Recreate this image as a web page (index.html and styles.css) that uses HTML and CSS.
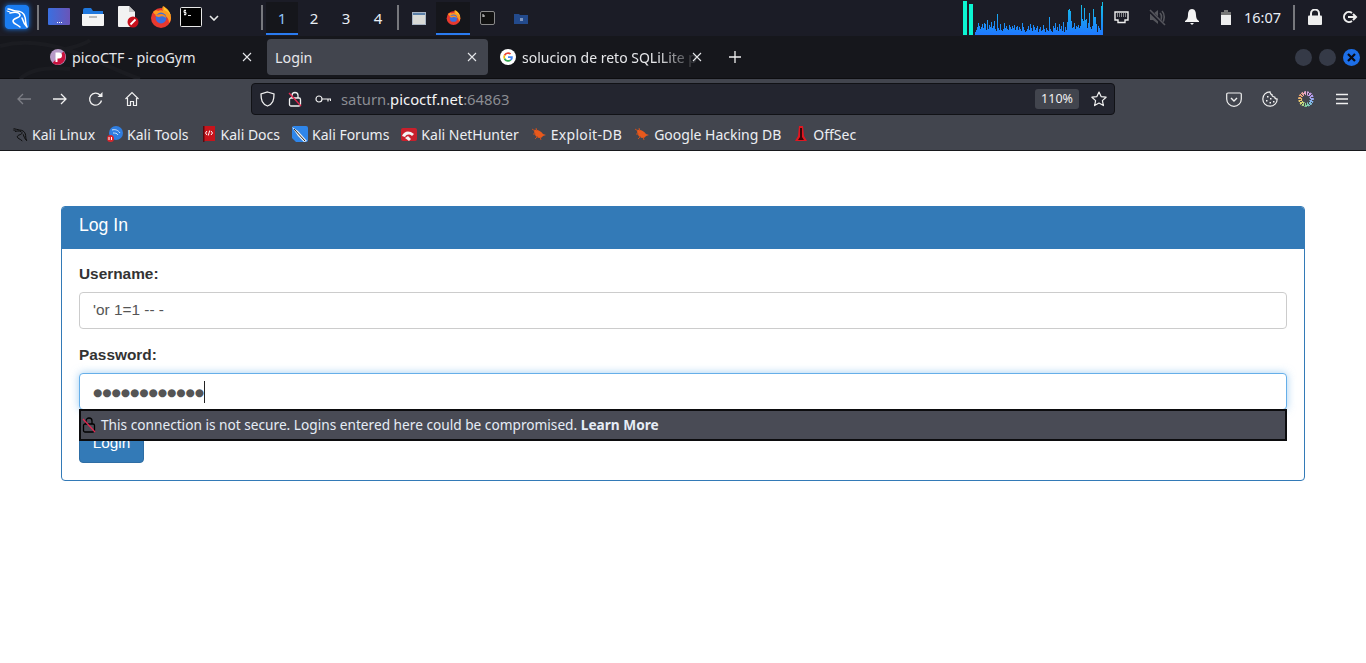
FILE: index.html
```html
<!DOCTYPE html>
<html lang="en">
<head>
    <meta charset="UTF-8">
    <title>Login</title>
    <link rel="stylesheet" href="styles.css">
</head>
<body>
    <!-- shared icons -->
    <svg class="defs" width="0" height="0">
        <defs>
            <linearGradient id="bars" x1="0" y1="0" x2="0" y2="1">
                <stop offset="0" stop-color="#14c4e6"/>
                <stop offset="1" stop-color="#1f78ff"/>
            </linearGradient>
            <symbol id="firefox" viewBox="0 0 22 22">
                <circle cx="11" cy="12" r="10" fill="#e8392f"/>
                <path d="M3 6c2-2 4-2 5-1 2-1 4-1 5 0-1-2-1-3 0-5 4 2 8 6 8 12 0 2-1 4-2 5 0-6-5-9-9-8-3 0-5 1-7-3z" fill="#ff9a1f"/>
                <path d="M14 1c3 2 6 5 7 9-2-3-4-5-7-6z" fill="#ffc72e"/>
                <circle cx="11" cy="12" r="5.4" fill="#3b6fe0"/>
                <path d="M5 9c2 0 4-1 6-1 3 0 5 2 5 4-2-2-5-2-7-1-2 0-3-1-4-2z" fill="#ff8a1f"/>
            </symbol>
            <symbol id="dragon" viewBox="0 0 24 24" fill="none" stroke-linecap="round" stroke-linejoin="round">
                <path d="M3 4c3 0 5 2 8 2 4 0 8 2 9 6 1 3 0 6 2 10-3-3-4-6-5-9" stroke-width="1.500"/>
                <path d="M5 8c4-1 9-1 10 2 1 3-7 3-7 6 0 3 4 3 7 6" stroke-width="1.500"/>
                <path d="M2 6l3 1" stroke-width="1"/>
            </symbol>
            <symbol id="bug" viewBox="0 0 16 16">
                <path d="M3 4c3-1 7 1 9 4l3 1-3 1c-1 2-4 3-6 1C4 10 3 7 3 4z" fill="#e8591c"/>
                <path d="M1 3l3 2M5 2l1 3M2 8l3 0M4 13l3-3M10 14l-1-3" stroke="#c7501f" fill="none"/>
            </symbol>
            <symbol id="close" viewBox="0 0 10 10">
                <path d="M1 1l8 8M9 1l-8 8" stroke="#e6e7ea" stroke-width="1.100" fill="none"/>
            </symbol>
        </defs>
    </svg>

    <!-- desktop panel -->
    <div class="panel">
        <svg class="kali-logo" width="24" height="24" viewBox="0 0 24 24">
            <rect width="24" height="24" rx="3" fill="#1a7cf0"/>
            <use href="#dragon" stroke="#fff"/>
        </svg>
        <span class="sep sep-first"></span>
        <svg class="launch launch-desktop" width="22" height="18" viewBox="0 0 22 18">
            <defs>
                <linearGradient id="desk" x1="0" y1="0" x2="1" y2="0">
                    <stop offset="0" stop-color="#3a6fe0"/>
                    <stop offset="1" stop-color="#6a55b8"/>
                </linearGradient>
            </defs>
            <rect width="22" height="17" rx="1" fill="url(#desk)"/>
            <path d="M9 14h1v1H9zM11 14h1v1h-1zM13 14h1v1h-1z" fill="#fff"/>
        </svg>
        <svg class="launch launch-folder" width="22" height="20" viewBox="0 0 22 20">
            <path d="M1 3a2 2 0 0 1 2-2h6l2 3h10v3H1z" fill="#1f77dd"/>
            <path d="M0 7h22v11a1 1 0 0 1-1 1H1a1 1 0 0 1-1-1z" fill="#f4f4f4"/>
            <rect x="7" y="9" width="8" height="2" fill="#bbb"/>
        </svg>
        <svg class="launch launch-file" width="21" height="22" viewBox="0 0 21 22">
            <path d="M0 1a1 1 0 0 1 1-1h10l6 6v14a1 1 0 0 1-1 1H1a1 1 0 0 1-1-1z" fill="#f2f2f2"/>
            <path d="M11 0l6 6h-6z" fill="#c4c4c4"/>
            <circle cx="15" cy="16" r="5.500" fill="#c8101c"/>
            <path d="M12.500 18.500l5-5" stroke="#fff" stroke-width="1.800"/>
        </svg>
        <svg class="launch launch-fox" width="22" height="22"><use href="#firefox"/></svg>
        <svg class="launch launch-term" width="22" height="20" viewBox="0 0 22 20">
            <rect x=".5" y=".5" width="21" height="19" rx="1" fill="#000" stroke="#e8e8e8"/>
            <path d="M6 3.500H4v2h2v2H4M5 2.500v6M8 8.500h3" stroke="#fff" stroke-width=".9" fill="none"/>
        </svg>
        <svg class="chevron" width="10" height="6" viewBox="0 0 10 6"><path d="M1 1l4 4 4-4" stroke="#e8e8e8" stroke-width="1.600" fill="none"/></svg>

        <span class="sep sep-work"></span>
        <div class="workspaces">
            <span class="ws ws-active">1</span>
            <span class="ws">2</span>
            <span class="ws">3</span>
            <span class="ws">4</span>
        </div>
        <span class="sep sep-tasks"></span>
        <div class="tasks">
            <span class="task">
                <svg width="14" height="13" viewBox="0 0 14 13"><rect x=".5" y=".5" width="13" height="12" fill="#d9dad6" stroke="#a8b4c4"/><rect x="1" y="1" width="12" height="2" fill="#5a7fa8"/></svg>
            </span>
            <span class="task task-active">
                <svg width="15" height="15"><use href="#firefox"/></svg>
            </span>
            <span class="task">
                <svg width="15" height="14" viewBox="0 0 15 14"><rect x=".5" y=".5" width="14" height="13" rx="1.500" fill="#111" stroke="#8a8a8a"/><path d="M3 3v3M3 5h2" stroke="#ddd" fill="none"/></svg>
            </span>
            <span class="task">
                <svg width="14" height="11" viewBox="0 0 14 11"><path d="M0 1h5l1 1h8v9H0z" fill="#234a8c"/><rect x="6" y="5" width="3" height="3" fill="#7d94bd"/></svg>
            </span>
        </div>

        <div class="tray">
            <svg class="cpu" width="140" height="34" viewBox="0 0 140 34">
                <rect x="0" y="0" width="4" height="34" fill="#0cf5d2"/>
                <rect x="6" y="3" width="4" height="31" fill="#0cf5d2"/>
                <path fill="url(#bars)" d="M12 34V31h1V29h1V26h1V22h1V25h1V28h1V26h1V23h1V27h1V22h1V23h1V29h1V19h1V28h1V24h1V26h1V21h1V27h1V25h1V20h1V28h1V30h1V13h1V27h1V29h1V23h1V29h1V30h1V28h1V22h1V27h1V25h1V28h1V29h1V24h1V26h1V28h1V25h1V27h1V24h1V29h1V26h1V25h1V29h1V26h1V28h1V30h1V22h1V26h1V29h1V31h1V30h1V28h1V25h1V29h1V23h1V27h1V30h1V24h1V26h1V29h1V27h1V25h1V31h1V28h1V26h1V30h1V29h1V24h1V28h1V31h1V27h1V29h1V30h1V16h1V28h1V30h1V31h1V25h1V27h1V22h1V29h1V26h1V30h1V23h1V28h1V25h1V30h1V21h1V31h1V26h1V29h1V21h1V9h1V8h1V10h1V20h1V27h1V26h1V22h1V28h1V25h1V26h1V24h1V27h1V25h1V4h1V18h1V20h1V7h1V19h1V18h1V27h1V22h1V12h1V26h1V28h1V25h1V8h1V16h1V16h1V23h1V31h1V25h1V27h1V29h1V5h1V1h1V34z"/>
            </svg>
            <svg class="tray-net" width="15" height="13" viewBox="0 0 15 13"><path d="M1 1h13v8h-3v2.500H4V9H1z" fill="none" stroke="#eee" stroke-width="1.400"/><path d="M3 3h9M3 5h9" stroke="#eee" stroke-dasharray="1 1"/></svg>
            <svg class="tray-mute" width="18" height="18" viewBox="0 0 18 18"><path d="M2 6h3l5-4v14l-5-4H2z" fill="#55565c"/><path d="M12 5c2 2 2 6 0 8M14 3c3 3 3 9 0 12" stroke="#55565c" stroke-width="1.600" fill="none"/><path d="M1 2l15 15" stroke="#1b1c26" stroke-width="3.400"/><path d="M2 2l15 15" stroke="#55565c" stroke-width="1.600"/></svg>
            <svg class="tray-bell" width="14" height="16" viewBox="0 0 14 16"><path d="M7 0c3 0 4 3 4 6 0 3 1 5 3 6v1H0v-1c2-1 3-3 3-6 0-3 1-6 4-6zM5 14h4l-2 2z" fill="#f4f4f4"/></svg>
            <svg class="tray-batt" width="10" height="15" viewBox="0 0 10 15"><path d="M3 0h4v2H3zM0 2h10v3H0z" fill="#777"/><rect y="5" width="10" height="10" fill="#eee"/></svg>
            <span class="clock">16:07</span>
            <span class="sep sep-clock"></span>
            <svg class="tray-lock" width="14" height="16" viewBox="0 0 14 16"><path d="M3 7V4.500a4 4 0 0 1 8 0V7" fill="none" stroke="#eee" stroke-width="2"/><rect y="6.500" width="14" height="9.500" rx="1" fill="#eee"/></svg>
            <svg class="tray-out" width="16" height="14" viewBox="0 0 16 14"><path d="M10 3a5 5 0 1 0 0 8" fill="none" stroke="#eee" stroke-width="2"/><path d="M6 7h7M11 4l3 3-3 3" fill="none" stroke="#eee" stroke-width="2"/></svg>
        </div>
    </div>

    <!-- tab strip -->
    <div class="tabbar">
        <svg class="tab-art" width="180" height="43" viewBox="0 0 180 43"><path d="M0 10c30-8 60 0 90 12 15 6 30 14 50 21M90 4c-10 8-30 8-40 16M20 43c10-10 30-12 50-10" fill="none" stroke="#1b1c21" stroke-width="4"/></svg>
        <div class="tab tab-pico">
            <svg width="16" height="16" viewBox="0 0 16 16"><circle cx="8" cy="8" r="8" fill="#b79ac7"/><path d="M2.500 14a8 8 0 0 0 11-11.500z" fill="#c8123e"/><path d="M5.500 13V3.500H9a3 3 0 0 1 0 6H7.500V13z" fill="#fff"/></svg>
            <span class="tab-title">picoCTF - picoGym</span>
            <svg class="tab-close" width="10" height="10"><use href="#close"/></svg>
        </div>
        <div class="tab tab-login">
            <span class="tab-title">Login</span>
            <svg class="tab-close" width="10" height="10"><use href="#close"/></svg>
        </div>
        <div class="tab tab-google">
            <svg width="16" height="16" viewBox="0 0 16 16"><circle cx="8" cy="8" r="8" fill="#fff"/><path d="M8 3.200a4.800 4.800 0 0 1 3.200 1.200L10 5.600A3 3 0 0 0 5.200 7L3.800 5.800A4.800 4.800 0 0 1 8 3.200z" fill="#ea4335"/><path d="M3.800 5.800L5.200 7a3 3 0 0 0 0 2L3.800 10.200a4.800 4.800 0 0 1 0-4.400z" fill="#fbbc05"/><path d="M3.800 10.200L5.200 9A3 3 0 0 0 10 10.400l1.300 1.100A4.800 4.800 0 0 1 3.800 10.200z" fill="#34a853"/><path d="M12.800 7.200H8v1.800h2.800A2.600 2.600 0 0 1 10 10.400l1.300 1.100a4.800 4.800 0 0 0 1.500-4.300z" fill="#4285f4"/></svg>
            <span class="tab-title tab-fade">solucion de reto SQLiLite p</span>
            <svg class="tab-close" width="10" height="10"><use href="#close"/></svg>
        </div>
        <svg class="tab-new" width="14" height="14" viewBox="0 0 14 14"><path d="M7 1v12M1 7h12" stroke="#f0f0f0" stroke-width="1.300"/></svg>
        <div class="win-buttons">
            <span class="win-btn"></span>
            <span class="win-btn"></span>
            <span class="win-btn win-close">
                <svg width="9" height="9" viewBox="0 0 9 9"><path d="M1 1l7 7M8 1l-7 7" stroke="#0b0b12" stroke-width="2.200"/></svg>
            </span>
        </div>
    </div>

    <!-- navigation toolbar -->
    <div class="navbar">
        <svg class="nav-icon nav-back" width="16" height="16" viewBox="0 0 16 16"><path d="M15 8H2M7 3L2 8l5 5" fill="none" stroke="#7d7f86" stroke-width="1.300"/></svg>
        <svg class="nav-icon" width="16" height="16" viewBox="0 0 16 16"><path d="M1 8h13M9 3l5 5-5 5" fill="none" stroke="#f0f0f0" stroke-width="1.300"/></svg>
        <svg class="nav-icon" width="16" height="16" viewBox="0 0 16 16"><path d="M13.500 9.500A6 6 0 1 1 12 4" fill="none" stroke="#f0f0f0" stroke-width="1.300"/><path d="M14.500 1v5h-5z" fill="#f0f0f0"/></svg>
        <svg class="nav-icon" width="16" height="16" viewBox="0 0 16 16"><path d="M1.500 8L8 1.500 14.500 8M3.500 7v7.500h3v-4h3v4h3V7" fill="none" stroke="#f0f0f0" stroke-width="1.200"/></svg>
        <div class="urlbar">
            <svg class="url-shield" width="15" height="16" viewBox="0 0 15 16"><path d="M7.500 1l6.500 2c0 6-1 10-6.500 12C2 13 1 9 1 3z" fill="none" stroke="#f0f0f0" stroke-width="1.300"/></svg>
            <svg class="url-lock" width="14" height="16" viewBox="0 0 14 16"><path d="M4 7V4.500a3 3 0 0 1 6 0V7" fill="none" stroke="#f0f0f0" stroke-width="1.300"/><rect x="1.500" y="7" width="11" height="8" rx="1.500" fill="none" stroke="#f0f0f0" stroke-width="1.300"/><path d="M1 2l12 13" stroke="#e22850" stroke-width="1.400"/></svg>
            <svg class="url-key" width="16" height="10" viewBox="0 0 16 10"><circle cx="4" cy="5" r="3" fill="none" stroke="#f0f0f0" stroke-width="1.200"/><path d="M7 5h9M13 5v2.500M15.500 5v2" stroke="#f0f0f0" stroke-width="1.200" fill="none"/></svg>
            <span class="url-text"><span class="url-dim">saturn.</span>picoctf.net<span class="url-dim">:64863</span></span>
            <span class="url-zoom">110%</span>
            <svg class="url-star" width="16" height="16" viewBox="0 0 16 16"><path d="M8 1l2.100 4.600 5 .6-3.700 3.400 1 5L8 12.100 3.600 14.600l1-5L.9 6.200l5-.6z" fill="none" stroke="#f0f0f0" stroke-width="1.200" stroke-linejoin="round"/></svg>
        </div>
        <div class="nav-right">
            <svg width="16" height="15" viewBox="0 0 16 15"><path d="M2 1h12a1.300 1.300 0 0 1 1.300 1.300V7a7.300 7.300 0 0 1-14.600 0V2.300A1.300 1.300 0 0 1 2 1z" fill="none" stroke="#f0f0f0" stroke-width="1.200"/><path d="M5 6l3 3 3-3" fill="none" stroke="#f0f0f0" stroke-width="1.400"/></svg>
            <svg width="16" height="16" viewBox="0 0 16 16"><path d="M8 .8a7.200 7.200 0 1 0 7.200 7.200c-1.500 0-2.500-1-2.500-2-1.500 0-3-1-2.700-2.500C8.800 3.500 8 2 8 .8z" fill="none" stroke="#f0f0f0" stroke-width="1.200"/><path d="M5 5h1.500v1.500H5zM4 9h1.500v1.500H4zM8 7h1.500v1.500H8zM7.500 11H9v1.500H7.500zM11 10h1.500v1.500H11z" fill="#f0f0f0"/></svg>
            <span class="rainbow"></span>
            <svg class="nav-menu" width="14" height="12" viewBox="0 0 14 12"><path d="M1 1.500h12M1 6h12M1 10.500h12" stroke="#f0f0f0" stroke-width="1.300"/></svg>
        </div>
    </div>

    <!-- bookmarks -->
    <div class="bookmarks">
        <span class="bm"><svg width="16" height="16"><use href="#dragon" stroke="#0c0c0c"/></svg>Kali Linux</span>
        <span class="bm">
            <svg width="16" height="16" viewBox="0 0 16 16"><circle cx="9" cy="7" r="7" fill="#2f7de0"/><path d="M5 4c3-1 6 0 8 3M6 7c2 0 4 0 5 2" stroke="#cfe3fa" fill="none"/><rect x="0" y="9" width="7" height="7" rx="3.500" fill="#d8262c"/><path d="M2 11v3M4.500 11v3" stroke="#fff"/></svg>Kali Tools</span>
        <span class="bm">
            <svg width="16" height="16" viewBox="0 0 16 16"><rect x="2" y="0" width="12" height="15" fill="#c8141c"/><rect x="2" y="0" width="1.500" height="16" fill="#5a0a0e"/><path d="M6 5L4.500 7 6 9M10 5l1.500 2L10 9M8.700 4.500L7.300 9.500" stroke="#fff" fill="none"/></svg>Kali Docs</span>
        <span class="bm">
            <svg width="16" height="16" viewBox="0 0 16 16"><path d="M2 0h12a2 2 0 0 1 2 2v12a2 2 0 0 1-2 2H4L0 12V2a2 2 0 0 1 2-2z" fill="#2f86ea"/><path d="M0 1l6 4 9 10-3 1-6-6z" fill="#f2f2f2"/><path d="M2 3l11 12" stroke="#222"/></svg>Kali Forums</span>
        <span class="bm">
            <svg width="16" height="16" viewBox="0 0 16 16"><rect y="2" width="16" height="13" rx="2" fill="#c9202c"/><path d="M1 10c2-5 7-6 12-2l-2 2c-3-2-5-2-7 1zM4 12l3-2 3 3-2 2z" fill="#f4f4f4"/></svg>Kali NetHunter</span>
        <span class="bm"><svg width="16" height="16"><use href="#bug"/></svg><span class="bm-wide">Exploit-DB</span></span>
        <span class="bm"><svg width="16" height="16"><use href="#bug"/></svg>Google Hacking DB</span>
        <span class="bm">
            <svg width="16" height="16" viewBox="0 0 16 16"><path d="M6 0h4l1 10 3 5H2l3-5z" fill="#e01620"/><path d="M7 2h2v9l2 3H5l2-3z" fill="#3a0608"/></svg>OffSec</span>
    </div>

    <!-- page content -->
    <div class="page">
        <div class="login-panel">
            <div class="login-heading">Log In</div>
            <form class="login-body">
                <div class="form-group">
                    <label class="form-label">Username:</label>
                    <input class="form-control" type="text" value="'or 1=1 -- -">
                </div>
                <div class="form-group form-group-pass">
                    <label class="form-label">Password:</label>
                    <div class="form-control form-control-focus"><span class="pass-dots">●●●●●●●●●●●●</span></div>
                    <div class="insecure-popup">
                        <svg width="14" height="17" viewBox="0 0 14 17"><path d="M4 8V5a3 3 0 0 1 6 0v3" fill="none" stroke="#000" stroke-width="1.300"/><rect x="1.500" y="8" width="11" height="8" rx="1.500" fill="none" stroke="#000" stroke-width="1.300"/><path d="M1 3l12 13" stroke="#e22850" stroke-width="1.300"/></svg>
                        <span>This connection is not secure. Logins entered here could be compromised. <strong>Learn More</strong></span>
                    </div>
                </div>
                <button class="btn-login" type="button">Login</button>
            </form>
        </div>
    </div>
</body>
</html>
```

FILE: styles.css
```css
* {
    box-sizing: border-box;
}
body {
    margin: 0;
    background-color: #fff;
    font-family: "Liberation Sans", Arial, sans-serif;
    overflow: hidden;
}
svg {
    display: block;
    flex: none;
}
.defs {
    position: absolute;
}

/* desktop panel */
.panel {
    display: flex;
    align-items: center;
    height: 36px;
    padding-left: 5px;
    background-color: #1b1c26;
    color: #e8eef5;
    font-family: "Noto Sans", sans-serif;
}
.kali-logo {
    box-shadow: 0 0 5px #1a7cf0;
    border-radius: 3px;
    margin-top: -2px;
}
.sep {
    width: 2px;
    height: 25px;
    background-color: #77787d;
    margin-top: -2px;
}
.sep-first {
    margin-left: 8px;
}
.launch {
    margin-top: -2px;
}
.launch-desktop { margin-left: 9px; }
.launch-folder { margin-left: 12px; }
.launch-file { margin-left: 14px; }
.launch-fox { margin-left: 11px; }
.launch-term { margin-left: 8px; }
.chevron {
    margin-left: 7px;
    margin-top: -1px;
}
.sep-work {
    margin-left: 42px;
}
.workspaces {
    display: flex;
    margin-left: 3px;
}
.ws {
    width: 32px;
    height: 33px;
    align-self: flex-start;
    line-height: 33px;
    text-align: center;
    font-size: 15px;
}
.ws-active {
    background-color: #15161b;
    border-bottom: 2px solid #2a7bf0;
    color: #8fc5f5;
}
.sep-tasks {
    margin-left: 3px;
}
.tasks {
    display: flex;
    margin-left: 3px;
}
.task {
    display: flex;
    align-items: center;
    justify-content: center;
    width: 34px;
    height: 33px;
}
.task-active {
    background-color: #15161b;
    border-bottom: 2px solid #2a7bf0;
}
.tray {
    display: flex;
    align-items: center;
    margin-left: auto;
    padding-right: 8px;
}
.cpu {
    align-self: flex-start;
}
.tray-net { margin-left: 11px; margin-top: -2px; }
.tray-mute { margin-left: 19px; margin-top: -2px; }
.tray-bell { margin-left: 19px; margin-top: -2px; }
.tray-batt { margin-left: 22px; margin-top: -2px; }
.clock {
    margin-left: 13px;
    font-size: 14.500px;
    margin-top: -3px;
}
.sep-clock { margin-left: 12px; }
.tray-lock { margin-left: 13px; margin-top: -2px; }
.tray-out { margin-left: 20px; margin-top: -2px; }

/* tab strip */
.tabbar {
    position: relative;
    display: flex;
    align-items: center;
    height: 43px;
    background-color: #16171c;
    border-bottom: 1px solid #0d0d10;
    color: #e6e7ea;
    font-family: "Noto Sans", sans-serif;
    font-size: 14.300px;
}
.tab-art {
    position: absolute;
    left: 0;
    top: 0;
}
.tab {
    position: relative;
    display: flex;
    align-items: center;
    height: 36px;
}
.tab-title {
    white-space: nowrap;
}
.tab-close {
    position: absolute;
    top: 13px;
}
.tab-pico {
    width: 217px;
    margin-left: 50px;
    gap: 6px;
}
.tab-pico .tab-close { left: 192px; }
.tab-login {
    width: 221px;
    padding-left: 8px;
    background-color: #42454e;
    border-radius: 4px;
}
.tab-login .tab-close { left: 200px; }
.tab-google {
    width: 218px;
    margin-left: 12px;
    gap: 6px;
}
.tab-fade {
    font-size: 14px;
    -webkit-mask-image: linear-gradient(to right, #000 78%, rgba(0, 0, 0, .15) 97%);
    mask-image: linear-gradient(to right, #000 78%, rgba(0, 0, 0, .15) 97%);
}
.tab-google .tab-close { left: 192px; }
.tab-new {
    margin-left: 10px;
}
.win-buttons {
    display: flex;
    gap: 7px;
    margin-left: auto;
    padding-right: 6px;
}
.win-btn {
    display: flex;
    align-items: center;
    justify-content: center;
    width: 17px;
    height: 17px;
    border-radius: 50%;
    background-color: #353a47;
}
.win-close {
    background-color: #1d6fe8;
}

/* navigation toolbar */
.navbar {
    display: flex;
    align-items: center;
    height: 41px;
    padding-left: 16px;
    padding-bottom: 1px;
    background-color: #42454e;
    color: #f0f0f0;
    font-family: "Noto Sans", sans-serif;
}
.nav-icon {
    margin-right: 20px;
}
.nav-icon + .urlbar {
    margin-left: 91px;
}
.urlbar {
    display: flex;
    align-items: center;
    width: 864px;
    height: 32px;
    padding: 0 7px 0 8px;
    background-color: #23252f;
    border: 1px solid #111216;
    border-radius: 4px;
}
.url-lock { margin-left: 13px; }
.url-key { margin-left: 13px; }
.url-text {
    margin-left: 10px;
    font-size: 14.800px;
    color: #f4f4f4;
}
.url-dim {
    color: #8b8d93;
}
.url-zoom {
    margin-left: auto;
    width: 44px;
    height: 20px;
    line-height: 20px;
    text-align: center;
    font-size: 12.500px;
    background-color: #42454e;
    border-radius: 3px;
}
.url-star {
    margin-left: 12px;
}
.nav-right {
    display: flex;
    align-items: center;
    gap: 20px;
    margin-left: 111px;
}
.nav-menu {
    margin-left: 1px;
}
.rainbow {
    width: 16px;
    height: 16px;
    border-radius: 50%;
    background:
        repeating-conic-gradient(#42454e 0 7deg, transparent 7deg 24deg),
        conic-gradient(#e3a7d8, #b79af0, #7fb8f0, #7fd8a0, #e8d46e, #eda06e, #e3a7d8);
    -webkit-mask-image: radial-gradient(circle, transparent 3.500px, #000 4px);
    mask-image: radial-gradient(circle, transparent 3.500px, #000 4px);
}

/* bookmarks */
.bookmarks {
    display: flex;
    align-items: center;
    gap: 12px;
    height: 31px;
    padding-left: 12px;
    padding-bottom: 2px;
    background-color: #42454e;
    border-bottom: 1px solid #17181c;
    color: #eceef2;
    font-family: "Noto Sans", sans-serif;
    font-size: 14px;
}
.bm {
    display: flex;
    align-items: center;
    gap: 4px;
}
.bm-wide {
    letter-spacing: .3px;
}

/* page content */
.page {
    padding: 55px 61px 0;
}
.login-panel {
    border: 1px solid #337ab7;
    border-radius: 4px;
    overflow: hidden;
}
.login-heading {
    height: 42px;
    padding: 8px 17px;
    background-color: #337ab7;
    color: #fff;
    font-size: 17.600px;
    line-height: 20px;
}
.login-body {
    padding: 15px 17px 17px;
    color: #333;
}
.form-group {
    margin-bottom: 16px;
}
.form-group-pass {
    position: relative;
}
.form-label {
    display: block;
    margin-bottom: 8px;
    font-size: 15.400px;
    font-weight: bold;
    line-height: 20px;
}
.form-control {
    display: block;
    width: 100%;
    height: 37px;
    padding: 0 13px 2px;
    border: 1px solid #ccc;
    border-radius: 4px;
    background-color: #fff;
    color: #555;
    font-family: inherit;
    font-size: 15.400px;
    line-height: 33px;
}
.form-control-focus {
    padding-bottom: 4px;
    border-color: #66afe9;
    box-shadow: 0 0 8px rgba(102, 175, 233, .6);
}
.pass-dots {
    display: inline-block;
    height: 22px;
    line-height: 22px;
    vertical-align: middle;
    border-right: 1px solid #222;
    font-family: "DejaVu Sans", sans-serif;
    font-size: 10.600px;
}
.btn-login {
    display: block;
    width: 65px;
    height: 37px;
    padding-bottom: 4px;
    border: 1px solid #2e6da4;
    border-radius: 4px;
    background-color: #337ab7;
    color: #fff;
    font-family: inherit;
    font-size: 15.400px;
}

/* insecure password warning over the form */
.insecure-popup {
    position: absolute;
    left: 0;
    right: 0;
    top: 64px;
    display: flex;
    align-items: center;
    gap: 5px;
    height: 32px;
    padding-left: 1px;
    padding-bottom: 2px;
    background-color: #494b55;
    border: 2px solid #0c0c0e;
    color: #e6edf6;
    font-family: "Noto Sans", sans-serif;
    font-size: 13.680px;
    white-space: nowrap;
}
```
